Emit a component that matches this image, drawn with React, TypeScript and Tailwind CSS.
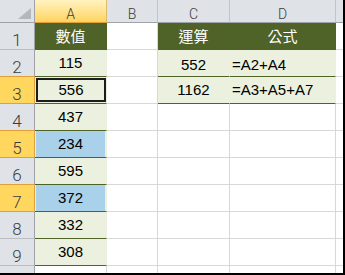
import React from 'react';

const num = "font-['Liberation_Sans',Arial,sans-serif] text-[15px] leading-[17px] text-black";
const cjk = "font-['Noto_Sans_CJK_TC','Noto_Sans_CJK_SC',sans-serif] text-[15px] leading-[20px] text-white";
const hdr = "font-['Roboto','DejaVu_Sans',sans-serif] font-light text-[#3c3c3c]";

const aVals: (number | null)[] = [null, 115, 556, 437, 234, 595, 372, 332, 308];
const selRows = [3, 5, 7];

function RowHead({ n, last }: { n: number | null; last?: boolean }) {
  const sel = n !== null && selRows.includes(n);
  const nextSel = n !== null && selRows.includes(n + 1);
  return (
    <div
      className={`w-[35px] h-full shrink-0 flex justify-center pt-[7px] border-r ${
        sel ? 'bg-[#ffd65e] border-r-[#e29f3a]' : 'bg-[#dfe2e6] border-r-[#9fa3a8]'
      } ${last ? '' : 'border-b'} ${sel || nextSel ? 'border-b-[#e29f3a]' : 'border-b-[#babec3]'}`}
    >
      {n !== null && <span className={`${hdr} text-[17px] leading-[20px]`}>{n}</span>}
    </div>
  );
}

function ACell({ r }: { r: number }) {
  const v = aVals[r - 1];
  if (r === 1) {
    return (
      <div className="w-[72px] h-full shrink-0 bg-[#4f6228] border-r border-b border-[#4f6228] flex items-center justify-center">
        <span className={cjk}>數值</span>
      </div>
    );
  }
  if (r === 3) {
    return (
      <div className="w-[72px] h-full shrink-0 bg-[#ebf1de] border-r border-r-[#ebf1de] border-b border-b-[#4f6228] pl-px pt-px pb-px">
        <div className="w-full h-full border-2 border-[#1c1c1c] flex justify-center pt-px">
          <span className={num}>{v}</span>
        </div>
      </div>
    );
  }
  if (r === 5 || r === 7) {
    return (
      <div className="w-[72px] h-full shrink-0 bg-[#ebf1de] border-r border-r-[#ebf1de] border-b border-b-[#4f6228] px-px">
        <div className="w-full h-full bg-[#a9d1ea] flex justify-center pt-[4px]">
          <span className={num}>{v}</span>
        </div>
      </div>
    );
  }
  return (
    <div className="w-[72px] h-full shrink-0 bg-[#ebf1de] border-r border-r-[#ebf1de] border-b border-b-[#4f6228] flex justify-center pt-[4px]">
      <span className={num}>{v}</span>
    </div>
  );
}

function White({ w, last, noRight }: { w: string; last?: boolean; noRight?: boolean }) {
  return (
    <div
      className={`${w} h-full shrink-0 bg-white ${noRight ? '' : 'border-r'} ${last ? '' : 'border-b'} border-[#d8d8d8]`}
    />
  );
}

function CD({ r }: { r: number }) {
  if (r === 1) {
    return (
      <>
        <div className="w-[72px] h-full shrink-0 bg-[#4f6228] border-r border-b border-[#4f6228] flex items-center justify-center">
          <span className={cjk}>運算</span>
        </div>
        <div className="w-[106px] h-full shrink-0 bg-[#4f6228] border-r border-b border-[#4f6228] flex items-center justify-center">
          <span className={cjk}>公式</span>
        </div>
      </>
    );
  }
  if (r === 2 || r === 3) {
    const c = r === 2 ? 552 : 1162;
    const d = r === 2 ? '=A2+A4' : '=A3+A5+A7';
    return (
      <>
        <div
          className={`w-[72px] h-full shrink-0 bg-[#ebf1de] border-r border-r-[#ebf1de] border-b border-b-[#4f6228] flex justify-center ${
            r === 2 ? 'pt-[6px]' : 'pt-[4px]'
          }`}
        >
          <span className={num}>{c}</span>
        </div>
        <div
          className={`w-[106px] h-full shrink-0 bg-[#ebf1de] border-r border-r-[#ebf1de] border-b border-b-[#4f6228] flex items-start pl-[2px] ${
            r === 2 ? 'pt-[6px]' : 'pt-[4px]'
          }`}
        >
          <span className={num}>{d}</span>
        </div>
      </>
    );
  }
  return (
    <>
      <White w="w-[72px]" />
      <White w="w-[106px]" />
    </>
  );
}

export default function App() {
  const rows = [1, 2, 3, 4, 5, 6, 7, 8, 9];
  return (
    <div className="w-[345px] h-[275px] border-r-2 border-b-2 border-black overflow-hidden bg-white">
      <div className="flex flex-col">
        <div className="flex h-[23px]">
          <div className="w-[35px] h-full shrink-0 bg-[#dfe2e6] border-r border-b border-[#9fa3a8]">
            <svg width="34" height="22" viewBox="0 0 34 22">
              <polygon points="31,8 31,19 18,19" fill="#b4b8bd" />
            </svg>
          </div>
          <div className="w-[72px] h-full shrink-0 bg-linear-to-b from-[#fff3c0] to-[#ffd45a] border-r border-r-[#dcbc6a] border-b border-b-[#e29f3a] flex justify-center pt-[6px]">
            <span className={`${hdr} text-[14px] leading-[17px]`}>A</span>
          </div>
          <div className="w-[51px] h-full shrink-0 bg-[#dfe2e6] border-r border-r-[#c2c6cb] border-b border-b-[#9fa3a8] flex justify-center pt-[6px]">
            <span className={`${hdr} text-[14px] leading-[17px]`}>B</span>
          </div>
          <div className="w-[72px] h-full shrink-0 bg-[#dfe2e6] border-r border-r-[#c2c6cb] border-b border-b-[#9fa3a8] flex justify-center pt-[6px]">
            <span className={`${hdr} text-[14px] leading-[17px]`}>C</span>
          </div>
          <div className="w-[106px] h-full shrink-0 bg-[#dfe2e6] border-r border-r-[#c2c6cb] border-b border-b-[#9fa3a8] flex justify-center pt-[6px]">
            <span className={`${hdr} text-[14px] leading-[17px]`}>D</span>
          </div>
          <div className="w-[7px] h-full shrink-0 bg-[#dfe2e6] border-b border-b-[#9fa3a8]" />
        </div>
        {rows.map((r) => (
          <div key={r} className="flex h-[27px]">
            <RowHead n={r} />
            <ACell r={r} />
            <White w="w-[51px]" />
            <CD r={r} />
            <White w="w-[7px]" noRight />
          </div>
        ))}
        <div className="flex h-[7px]">
          <RowHead n={null} last />
          <White w="w-[72px]" last />
          <White w="w-[51px]" last />
          <White w="w-[72px]" last />
          <White w="w-[106px]" last />
          <White w="w-[7px]" last noRight />
        </div>
      </div>
    </div>
  );
}
